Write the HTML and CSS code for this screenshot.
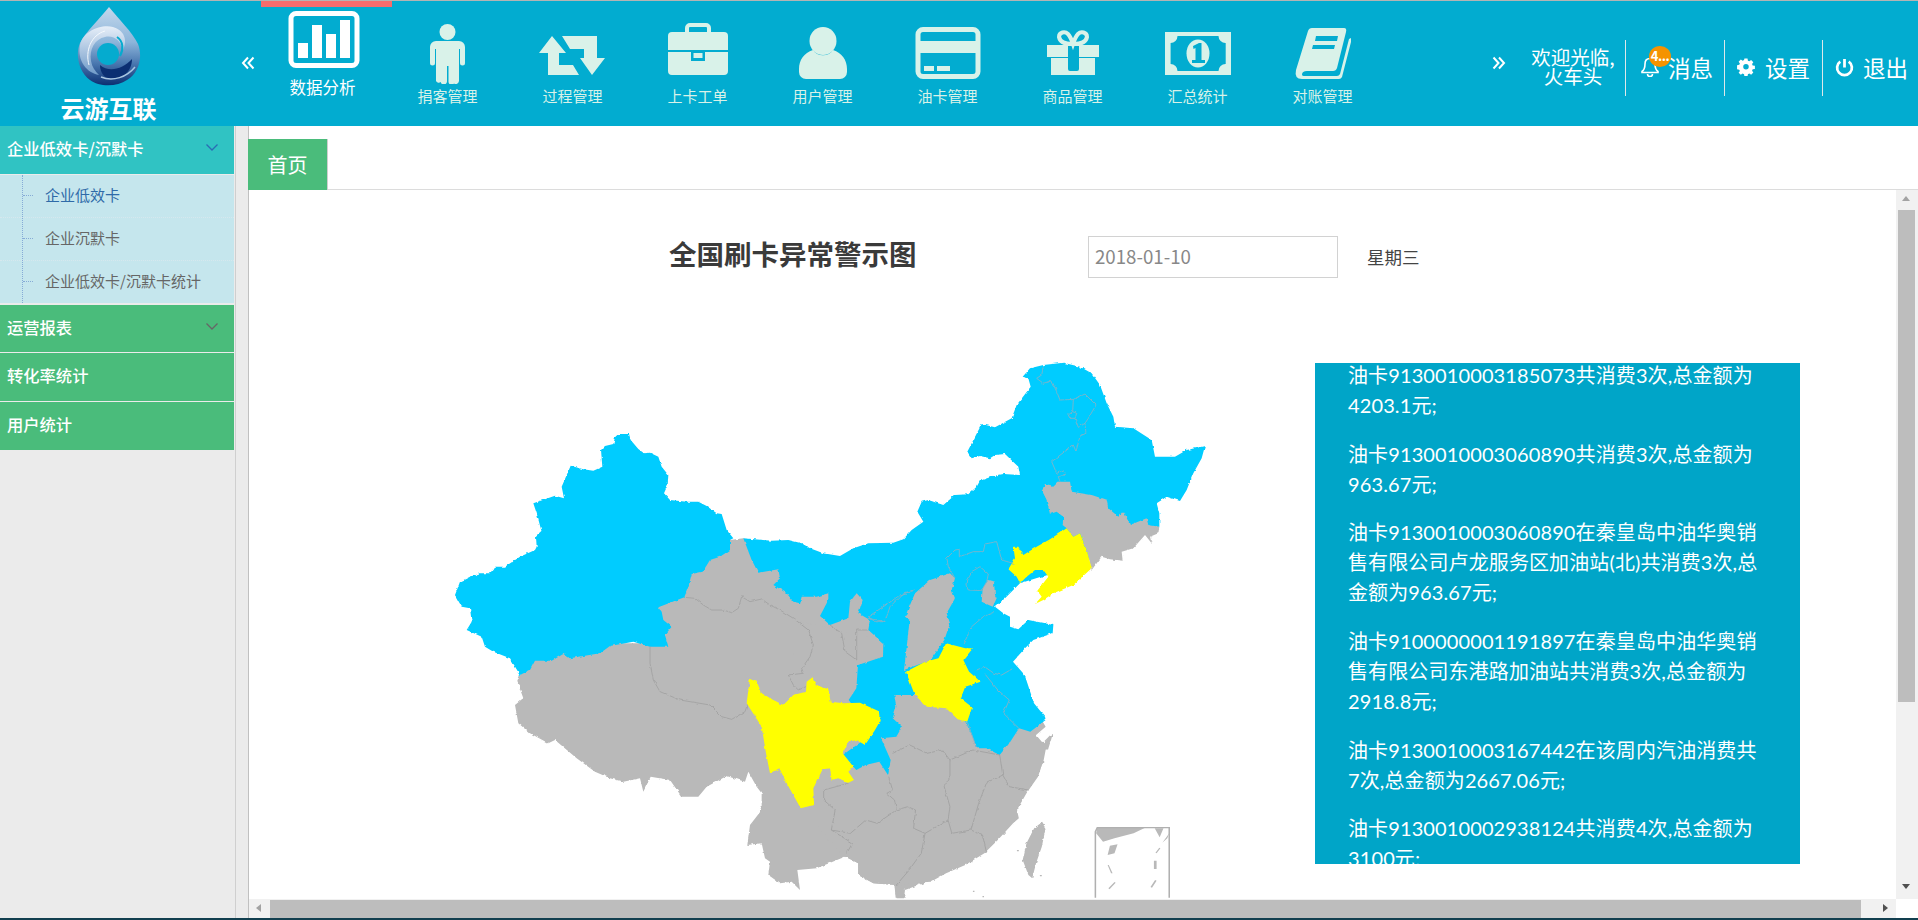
FILE: index.html
```html
<!DOCTYPE html>
<html lang="zh">
<head>
<meta charset="utf-8">
<title>云游互联</title>
<link rel="stylesheet" href="styles.css">
</head>
<body>
<div class="app">
  <header class="header">
    <div class="logo">
      <svg class="logo-mark" viewBox="0 0 64 79" width="64" height="79">
        <defs>
          <linearGradient id="dropFill" x1="0" y1="0" x2="0" y2="1">
            <stop offset="0" stop-color="#c4d8ec"/>
            <stop offset=".45" stop-color="#8db5da"/>
            <stop offset=".72" stop-color="#4a78b0"/>
            <stop offset="1" stop-color="#0b2f72"/>
          </linearGradient>
          <linearGradient id="dropLight" x1="0" y1="0" x2="0" y2="1">
            <stop offset="0" stop-color="#e6eef8"/>
            <stop offset="1" stop-color="#6f9ac8"/>
          </linearGradient>
        </defs>
        <path d="M32 0C40 10 56 26 61 37C66 50 62 66 50 73C40 80 22 80 13 73C2 65-2 48 3 36C8 26 24 10 32 0Z" fill="url(#dropFill)"/>
        <path d="M3 38C6 24 24 17 36 20C47 23 51 33 46 43C44 34 37 28 28 30C18 32 12 42 14 54C15 60 18 64 22 68C10 66 0 54 3 38Z" fill="url(#dropLight)"/>
        <circle cx="31" cy="47" r="11" fill="#05abcf"/>
        <path d="M40 30C46 34 47 42 43 49" fill="none" stroke="#05abcf" stroke-width="2"/>
        <path d="M23 58C32 66 46 62 55 52C55 64 46 72 35 72C28 72 23 66 23 58Z" fill="#0b2f72"/>
        <path d="M24 70C36 75 50 70 58 60" fill="none" stroke="#a9c6e2" stroke-width="1.5"/>
        <path d="M12 58C8 44 14 28 28 24" fill="none" stroke="#f5f9fd" stroke-width="1"/>
      </svg>
      <div class="logo-text">云游互联</div>
    </div>
    <svg class="prev" viewBox="0 0 14 14" width="14" height="14"><path d="M7 1.500 2 7l5 5.500M12.500 1.500 7.500 7l5 5.500" fill="none" stroke="#fff" stroke-width="2"/></svg>
    <nav class="nav">
      <a class="nav-item active">
        <svg class="nav-icon-active" viewBox="0 0 72 58" width="72" height="58">
          <rect x="3" y="2.500" width="66" height="52" rx="5" fill="none" stroke="#fff" stroke-width="5"/>
          <path d="M10 32h10v15H10zM24 14h10v33H24zM38 23h10v24H38zM52 9h10v38H52z" fill="#fff"/>
        </svg>
        <span class="nav-label">数据分析</span>
      </a>
      <a class="nav-item">
        <svg class="nav-icon" viewBox="0 0 80 62" width="80" height="62">
          <ellipse cx="39.500" cy="10" rx="8" ry="8"/>
          <path d="M28 19H51a6 6 0 0 1 6 6V41a2.500 2.500 0 0 1-5 0V27H51V59a3.200 3.200 0 0 1-5 2.400a3 3 0 0 1-5.500-1.800V44H39V59.500a3.200 3.200 0 0 1-6.300.500a3 3 0 0 1-4.700-1V27H27V41a2.500 2.500 0 0 1-5 0V25a6 6 0 0 1 6-6Z"/>
        </svg>
        <span class="nav-label">捐客管理</span>
      </a>
      <a class="nav-item">
        <svg class="nav-icon" viewBox="0 0 80 62" width="80" height="62">
          <g transform="translate(0 2)">
            <path d="M19 12 33 29H26V41H40L46 51H15V29H6Z"/>
            <path d="M29 12H64V34H72L59 51 47 34H51V25H37Z"/>
          </g>
        </svg>
        <span class="nav-label">过程管理</span>
      </a>
      <a class="nav-item">
        <svg class="nav-icon" viewBox="0 0 80 62" width="80" height="62">
          <rect class="line" x="29" y="3" width="22" height="11" rx="3" stroke-width="4"/>
          <path d="M14 10H66a4 4 0 0 1 4 4V28H10V14a4 4 0 0 1 4-4Z"/>
          <path d="M10 30H33V39H47V30H70V49a4 4 0 0 1-4 4H14a4 4 0 0 1-4-4Z"/>
          <rect x="35.500" y="31" width="9" height="5"/>
        </svg>
        <span class="nav-label">上卡工单</span>
      </a>
      <a class="nav-item">
        <svg class="nav-icon" viewBox="0 0 80 62" width="80" height="62">
          <path d="M16 47C16 38 21 31 30 28C34 35 46 35 50 28C59 31 64 38 64 47V50a7 7 0 0 1-7 7H23a7 7 0 0 1-7-7Z"/>
          <ellipse cx="40" cy="19" rx="13.500" ry="14"/>
        </svg>
        <span class="nav-label">用户管理</span>
      </a>
      <a class="nav-item">
        <svg class="nav-icon" viewBox="0 0 80 62" width="80" height="62">
          <rect class="line" x="10" y="7.500" width="60" height="47" rx="5" stroke-width="5"/>
          <path d="M10 19H70V31H10zM16 44H26V49H16zM29 44H42V49H29z"/>
        </svg>
        <span class="nav-label">油卡管理</span>
      </a>
      <a class="nav-item">
        <svg class="nav-icon" viewBox="0 0 80 62" width="80" height="62">
          <path class="line" d="M39 22C33 22 27 20 26 15C26 10 32 9 35 12C37 14 39 19 40 22C41 19 43 14 45 12C48 9 54 10 54 15C53 20 47 22 41 22" stroke-width="4"/>
          <path d="M14 23H35V35H14zM46 23H66V35H46zM18 36H35V47a2 2 0 0 0 2 2H44a2 2 0 0 0 2-2V36H62V53H18zM35 23H46V24H35z"/>
        </svg>
        <span class="nav-label">商品管理</span>
      </a>
      <a class="nav-item">
        <svg class="nav-icon" viewBox="0 0 80 62" width="80" height="62">
          <path fill-rule="evenodd" d="M7 10H73V53H7ZM19.500 14A7 7 0 0 1 12.600 21V42A7 7 0 0 1 19.500 49H60.500A7 7 0 0 1 67.700 42V21A7 7 0 0 1 60.500 14Z"/>
          <ellipse cx="40" cy="31.500" rx="11.500" ry="14"/>
          <path class="cut" d="M35 24l6-3h2.500V38H47v3H34v-3h3.500V26l-2 1Z"/>
        </svg>
        <span class="nav-label">汇总统计</span>
      </a>
      <a class="nav-item">
        <svg class="nav-icon" viewBox="0 0 80 62" width="80" height="62">
          <path d="M29 6H61Q64 6 63 10L54 46Q53 49 50 49H24Q19 49 19 52.500Q19 54 22 54H54Q56 54 57 52L66 17L68 16V20L59 55Q58 57 56 57H19Q11 57 13 48L25 9Q26 6 29 6Z"/>
          <path class="cut" d="M33 14H55L54 19H32ZM30 23H52L51 27H29Z"/>
        </svg>
        <span class="nav-label">对账管理</span>
      </a>
    </nav>
    <svg class="next" viewBox="0 0 14 14" width="14" height="14"><path d="M1.500 1.500 6.500 7l-5 5.500M7 1.500 12 7l-5 5.500" fill="none" stroke="#fff" stroke-width="2"/></svg>
    <div class="welcome">欢迎光临,<br>火车头</div>
    <div class="tool tool-msg">
      <svg class="tool-icon" viewBox="0 0 20 20" width="20" height="20"><path d="M10 1.500c-3.500 0-5 2.500-5 5.500 0 4-1 6-3 7.500v1h16v-1c-2-1.500-3-3.500-3-7.500 0-3-1.500-5.500-5-5.500ZM7.500 17a2.500 2.500 0 0 0 5 0" fill="none" stroke="#fff" stroke-width="1.600"/></svg>
      <span class="tool-label">消息</span>
      <span class="badge">4...</span>
    </div>
    <div class="tool tool-set">
      <svg class="tool-icon" viewBox="0 0 18 18" width="18" height="18"><path fill="#fff" fill-rule="evenodd" d="M7.300 0h3.400l.4 2.400 1.500.7 2-1.400 2.400 2.400-1.400 2 .7 1.500 2.400.4v3.400l-2.400.4-.7 1.500 1.400 2-2.400 2.400-2-1.400-1.500.7-.4 2.400H7.300l-.4-2.400-1.500-.7-2 1.400L1 15.600l1.400-2-.7-1.500L-.7 11.700V7.300l2.400-.4.700-1.500-1.400-2L3.400 1l2 1.400 1.500-.7ZM9 6a3 3 0 1 0 0 6 3 3 0 0 0 0-6Z" transform="translate(.7 .5) scale(.92)"/></svg>
      <span class="tool-label">设置</span>
    </div>
    <div class="tool tool-exit">
      <svg class="tool-icon" viewBox="0 0 18 18" width="19" height="19"><path d="M9 1v8M5 3.500a7 7 0 1 0 8 0" fill="none" stroke="#fff" stroke-width="2.600"/></svg>
      <span class="tool-label">退出</span>
    </div>
  </header>

  <div class="main">
    <aside class="sidebar">
      <div class="menu-head open">企业低效卡/沉默卡
        <svg class="chev" viewBox="0 0 12 7" width="12" height="7"><path d="M.5.500 6 6 11.500.500" fill="none" stroke="#2a6cb4" stroke-width="1.300"/></svg>
      </div>
      <ul class="sub-list">
        <li class="sub-item current">企业低效卡</li>
        <li class="sub-item">企业沉默卡</li>
        <li class="sub-item">企业低效卡/沉默卡统计</li>
      </ul>
      <div class="menu-head">运营报表
        <svg class="chev" viewBox="0 0 12 7" width="12" height="7"><path d="M.5.500 6 6 11.500.500" fill="none" stroke="#666" stroke-width="1.300"/></svg>
      </div>
      <div class="menu-head">转化率统计</div>
      <div class="menu-head">用户统计</div>
    </aside>
    <div class="gutter"></div>
    <section class="content">
      <div class="tabbar"><div class="tab">首页</div></div>
      <div class="view">
        <div class="scroller">
          <div class="title-row">
            <h1 class="title">全国刷卡异常警示图</h1>
            <div class="date-input">2018-01-10</div>
            <div class="weekday">星期三</div>
          </div>
          <div class="body-row">
            <svg class="map" viewBox="0 39 2340 1608" width="780" height="536">
              <defs>
                <filter id="rough" x="-5%" y="-5%" width="110%" height="110%" filterUnits="objectBoundingBox">
                  <feTurbulence type="fractalNoise" baseFrequency="0.07" numOctaves="2" seed="4" result="noise"/>
                  <feDisplacementMap in="SourceGraphic" in2="noise" scale="9" xChannelSelector="R" yChannelSelector="G"/>
                </filter>
              </defs>
              <g filter="url(#rough)">
              <!-- gray base: west -->
              <g class="gray" transform="translate(0 540)">
                <path d="M240 435 232 455 250 505 225 525 235 580 270 610 325 640 345 630 410 685 465 725 510 745 550 755 600 745 610 785 632 740 690 750 725 800 775 800 800 770 860 738 915 755 925 725 950 770 965 790 965 840 930 885 922 945 965 940 975 985 990 995 985 1035 1020 1060 1055 1055 1080 1080 1072 1020 1130 1015 1215 980 1255 1000 1255 1035 1300 1060 1365 1065 1370 1105 1392 1105 1395 1080 1450 1060 1500 1030 1500 300 1280 200 910 25 870 30 810 70 740 130 640 225 660 340 510 340 370 365 285 385 270 410Z"/>
              </g>
              <!-- gray base: east -->
              <g class="gray" transform="translate(600 810) scale(1.148 1)">
                <path d="M695 833 668 800 700 790 760 785 800 760 850 735 900 700 935 660 975 610 990 595 985 570 1010 520 1040 470 1055 420 1060 390 1070 370 1050 365 1035 345 1060 320 1050 300 1020 260 985 180 900 180 800 100 400 0 400 300 450 600 530 705 570 730 570 765 610 790 665 795 668 833Z"/>
                <path d="M1050 607 1060 625 1050 680 1035 730 1025 775 1015 765 1000 720 1010 670 1030 625Z"/>
                <path d="M1055 365 1075 342 1078 345 1066 390 1060 388Z"/>
              </g>
              <!-- blue -->
              <path class="blue" d="M525 262 535 252 567 252 572 270 595 297 612 310 630 308 655 320 665 350 685 375 683 405 672 430 690 450 740 455 775 455 800 468 830 490 845 492 860 540 880 565 870 570 870 600 840 620 810 630 788 665 755 672 745 710 733 742 655 772 665 785 670 810 695 830 675 855 685 890 685 890 630 890 580 875 510 888 480 910 390 925 370 912 335 932 285 932 270 960 240 975 210 925 160 905 135 890 125 860 80 840 95 815 90 775 65 770 45 735 60 695 90 680 120 670 150 670 165 650 195 650 240 620 285 600 290 590 288 560 305 545 290 490 280 460 345 437 372 445 365 410 392 347 430 358 460 362 487 350 483 300 495 288 520 282Z"/>
              <path class="blue" d="M910 565 995 572 1045 570 1085 580 1110 595 1150 610 1200 618 1240 595 1285 580 1360 578 1390 568 1415 540 1450 515 1432 485 1445 455 1465 450 1510 465 1545 435 1585 433 1610 410 1620 392 1660 378 1690 372 1740 375 1735 350 1695 312 1665 315 1650 325 1620 318 1595 325 1582 305 1625 222 1665 232 1715 205 1730 165 1772 110 1765 85 1748 80 1770 55 1810 45 1870 38 1920 50 1955 70 1980 105 2000 160 2020 200 2025 230 2080 235 2135 270 2145 320 2205 320 2240 300 2295 288 2285 325 2260 370 2240 420 2220 453 2180 440 2150 460 2158 490 2158 530 2100 540 1900 650 1740 700 1695 745 1665 770 1690 790 1710 800 1710 830 1735 838 1765 810 1840 825 1838 850 1780 870 1755 895 1719 935 1754 975 1782 1060 1815 1100 1817 1110 1771 1145 1737 1135 1708 1180 1679 1215 1639 1195 1610 1195 1596 1155 1576 1115 1500 1050 1424 1035 1363 1035 1369 1070 1358 1105 1386 1130 1369 1160 1323 1165 1352 1230 1344 1275 1318 1235 1277 1245 1249 1260 1208 1215 1300 1150 1226 1050 1249 1015 1254 945 1329 920 1330 880 1285 840 1290 810 1255 790 1268 750 1250 730 1230 755 1225 805 1170 825 1140 798 1165 750 1165 730 1130 740 1085 740 1080 760 1060 755 1040 730 1000 705 1020 685 1015 658 955 668 935 630Z"/>
              <!-- gray over blue -->
              <g class="gray">
                <path d="M1530 670 1545 685 1535 720 1545 745 1520 790 1530 820 1513 870 1472 930 1392 960 1398 910 1409 810 1395 800 1425 730 1470 690 1500 680Z"/>
              </g>
              <g transform="translate(1200 0)">
                <path class="gray" d="M605 420 615 405 640 410 655 395 690 395 695 425 755 435 800 450 805 475 835 500 850 482 870 525 920 505 925 525 958 530 955 550 930 560 935 580 915 555 880 595 845 605 848 632 810 628 785 620 755 660 740 600 720 550 700 560 680 535 668 525 670 500 650 485 630 492 620 450Z"/>
                <path class="gray" d="M445 690 462 695 465 735 470 745 458 770 425 755 428 715Z"/>
                <path class="yellow" d="M505 658 525 625 520 590 535 590 550 615 590 590 630 568 680 535 700 560 720 550 740 600 755 655 700 705 640 730 610 750 585 762 605 740 592 722 625 680 610 660 585 660 560 680 540 700 530 680Z"/>
                <path class="seam" d="M610 50 605 75 590 85 610 100 635 92 650 125 660 150 700 148 735 132 768 165 745 205 735 220 738 250 720 258 708 305 700 285 635 335 650 370 670 362 678 372 655 380 660 395"/>
                <path class="seam" d="M700 148 698 185 685 195 690 205 705 205 715 232 735 220M698 185 710 190 705 205"/>
                <path class="seam" d="M320 625 345 600 358 598 358 620 400 605 430 605 435 582 470 575 485 630 520 640M320 625 325 650 345 685"/>
                <path class="seam" d="M380 690 395 665 420 650 445 672 440 695 425 722 385 720 378 705Z"/>
                <path class="seam" d="M372 880 395 830 430 800 465 785"/>
                <path class="seam" d="M130 815 105 815 85 800 145 760 180 735 220 722"/>
              </g>
              <g transform="translate(600 810) scale(1.148 1)">
                <path class="yellow" d="M800 70 850 85 870 85 845 120 860 155 890 185 850 200 838 235 868 262 855 305 830 298 800 265 750 260 718 225 695 155 745 125 780 115Z"/>
                <path class="seam" d="M880 150 900 140 925 160 945 165 975 145M900 160 935 210 965 240 950 280 990 325M855 305 880 385"/>
                <path class="seam-gray" d="M660 400 705 375 750 400 790 390 810 420 870 390 940 405M810 420 810 470 795 500 810 560 805 600 815 640 865 630 885 550 905 490 948 465 940 405M948 465 965 500 1015 510M865 630 895 645 905 695M805 600 745 640 735 700 700 755 670 795M650 470 660 510 645 520 665 540 670 570 700 560 720 570 715 625 745 640M480 510 480 540 510 570 500 630 555 670 540 700M480 510 545 490M500 630 550 640 590 600 620 610 670 570"/>
              </g>
              <g transform="translate(0 540)">
                <path class="seam-gray" d="M733 202 765 205 790 225 815 240 850 240 875 248 895 235 905 200 930 215 965 207 990 225 1020 240 1060 265 1105 300 1120 345 1110 380 1085 415 1090 430 1045 435 1060 465 1075 480 1098 470"/>
                <path class="seam-gray" d="M630 350 630 400 640 450 660 485 720 510 810 525 845 560 875 568 915 545 925 515"/>
                <path class="seam-gray" d="M1170 285 1205 310 1215 365 1250 390 1250 300 1285 300"/>
                <path class="seam" d="M1285 265 1335 275 1350 230 1390 190 1420 180"/>
                <path class="yellow" d="M930 447 950 455 965 490 1000 510 1030 525 1060 495 1098 485 1100 455 1118 442 1128 465 1165 478 1172 515 1210 520 1260 518 1320 545 1322 570 1305 600 1275 645 1250 630 1225 635 1208 670 1240 710 1225 725 1242 750 1225 758 1195 745 1175 750 1170 715 1148 718 1120 775 1122 825 1082 835 1040 760 1018 715 990 730 978 670 965 590 920 520 925 480Z"/>
              </g>
              </g>
              <!-- South China Sea inset -->
              <g class="gray" transform="translate(600 810) scale(1.148 1)">
                <path d="M1195 623H1320L1290 640 1240 655 1210 665 1192 640ZM1345 625H1368L1358 652ZM1383 640 1365 668 1378 655ZM1228 677 1248 673 1240 700 1222 705ZM1225 735 1235 760 1231 760 1222 735ZM1343 722H1350V747H1343ZM1360 685 1350 700 1347 698 1357 683ZM1350 782 1338 803 1334 801 1346 780ZM1243 788 1227 808 1224 805 1240 786ZM985 690 990 690 990 694 985 694ZM1045 765 1050 765 1050 769 1045 769ZM870 812 874 812 874 816 870 816ZM895 828 899 828 899 832 895 832Z"/>
                <path class="frame" d="M1190 833V635L1195 623H1383V833"/>
              </g>
            </svg>
            <div class="notice">
              <div class="notice-inner">
                <p>油卡9130010003185073共消费3次,总金额为<br>4203.1元;</p>
                <p>油卡9130010003060890共消费3次,总金额为<br>963.67元;</p>
                <p>油卡9130010003060890在秦皇岛中油华奥销<br>售有限公司卢龙服务区加油站(北)共消费3次,总<br>金额为963.67元;</p>
                <p>油卡9100000001191897在秦皇岛中油华奥销<br>售有限公司东港路加油站共消费3次,总金额为<br>2918.8元;</p>
                <p>油卡9130010003167442在该周内汽油消费共<br>7次,总金额为2667.06元;</p>
                <p>油卡9130010002938124共消费4次,总金额为<br>3100元;</p>
              </div>
            </div>
          </div>
        </div>
        <div class="vbar">
          <span class="arrow arrow-up"></span>
          <div class="vthumb"></div>
          <span class="arrow arrow-down"></span>
        </div>
      </div>
      <div class="hrow">
        <div class="hbar">
          <span class="arrow arrow-left"></span>
          <div class="hthumb"></div>
          <span class="arrow arrow-right"></span>
        </div>
        <div class="corner"></div>
      </div>
    </section>
  </div>
  <div class="foot-line"></div>
</div>
</body>
</html>
```

FILE: styles.css
```css
* { box-sizing: border-box; }
html, body { margin: 0; padding: 0; }
body {
  width: 1918px;
  height: 920px;
  overflow: hidden;
  font-family: "Noto Sans CJK SC", "Noto Sans", sans-serif;
  background: #ebebeb;
}
.app { display: flex; flex-direction: column; height: 920px; border-top: 1px solid #b4b4b4; }

/* header */
.header { display: flex; flex: none; height: 125px; background: #02acd0; color: #fff; overflow: hidden; }
.logo { flex: none; width: 217px; display: flex; flex-direction: column; align-items: center; padding-top: 6px; }
.logo-mark { display: block; }
.logo-text { margin-top: 7px; font-size: 24px; line-height: 30px; font-weight: 700; white-space: nowrap; }
.prev { flex: none; margin: 55px 5px 0 24px; }
.nav { display: flex; flex: none; }
.nav-item { position: relative; flex: none; width: 125px; display: flex; flex-direction: column; align-items: center; padding-top: 21px; color: #d9f2e9; }
.nav-item.active { padding-top: 10px; color: #fff; }
.nav-item.active::before { content: ""; position: absolute; left: 1px; top: 0; width: 131px; height: 6px; background: #f76c6c; }
.nav-icon { display: block; fill: #d9f2e9; }
.nav-icon .line { fill: none; stroke: #d9f2e9; }
.nav-icon .cut { fill: #02acd0; }
.nav-icon-active { display: block; margin-left: 2px; }
.nav-label { margin-top: 2px; font-size: 15px; line-height: 20px; white-space: nowrap; }
.active .nav-label { margin-top: 8px; font-size: 16.500px; }
.next { flex: none; margin: 55px 6px 0 107px; }
.welcome { flex: none; width: 114px; height: 56px; margin-top: 39px; padding: 7px 0 0 9px; border-right: 1px solid #dfe8ea; font-size: 19.500px; line-height: 19px; text-align: center; white-space: nowrap; }
.tool { position: relative; flex: none; height: 56px; margin-top: 39px; padding-bottom: 2px; display: flex; align-items: center; font-size: 22.500px; border-right: 1px solid #dfe8ea; }
.tool-msg { width: 99px; padding-left: 14px; gap: 8px; }
.tool-set { width: 98px; padding-left: 12px; gap: 10px; }
.tool-exit { width: 96px; padding-left: 12px; gap: 9px; border-right: 0; }
.tool-icon { flex: none; display: block; }
.tool-label { line-height: 30px; white-space: nowrap; }
.badge { position: absolute; left: 23px; top: 6px; width: 22px; height: 21px; border-radius: 50%; background: #f59300; color: #fff; font-size: 13px; line-height: 20px; font-weight: 700; text-align: center; letter-spacing: -.5px; white-space: nowrap; }

/* main */
.main { display: flex; flex: 1; min-height: 0; }
.sidebar { flex: none; width: 234px; background: #ebebeb; }
.menu-head { position: relative; height: 48px; margin-bottom: 1px; padding-left: 7px; background: #4abc7b; color: #fff; font-size: 16.300px; line-height: 45px; font-weight: 500; white-space: nowrap; }
.menu-head.open { background: #30c3c3; }
.sub-list + .menu-head { height: 47px; margin-top: 2px; }
.chev { position: absolute; left: 206px; top: 18px; }
.sub-list { position: relative; list-style: none; margin: 0; padding: 0; background: #c5e6ed; }
.sub-list::before { content: ""; position: absolute; left: 22px; top: 0; bottom: 0; border-left: 1px dotted #86abd6; }
.sub-item { position: relative; height: 43px; padding-left: 45px; font-size: 15px; line-height: 40px; color: #666; border-bottom: 1px dotted #d6e8ee; white-space: nowrap; }
.sub-item:last-child { height: 42px; border-bottom: 0; }
.sub-item::before { content: ""; position: absolute; left: 23px; top: 20px; width: 10px; border-top: 1px dotted #86abd6; }
.sub-item.current { color: #2f6aa8; }
.gutter { flex: none; width: 14px; margin-left: 1px; border-left: 1px solid #cfcfcf; border-right: 1px solid #c0c0c0; background: #ebebeb; }

.content { flex: 1; min-width: 0; display: flex; flex-direction: column; background: #fff; }
.tabbar { flex: none; height: 64px; display: flex; align-items: flex-end; border-bottom: 1px solid #dcdcdc; }
.tab { width: 80px; height: 51px; margin-left: -1px; margin-bottom: -1px; background: #4abc7b; border-right: 1px solid #cfcfcf; color: #fff; font-size: 20px; line-height: 52px; text-align: center; }
.view { flex: 1; min-height: 0; display: flex; }
.scroller { flex: 1; min-width: 0; overflow: hidden; }
.title-row { display: flex; align-items: flex-start; padding: 46px 0 0 420px; }
.title { width: 419px; margin: -2px 0 0; font-size: 27.500px; line-height: 38px; font-weight: 700; color: #3a3a3a; white-space: nowrap; }
.date-input { width: 250px; height: 42px; border: 1px solid #d2d2d2; padding-left: 6px; font-size: 18.700px; line-height: 38px; color: #888; }
.weekday { margin-left: 29px; font-size: 17.500px; line-height: 42px; color: #444; white-space: nowrap; }
.body-row { display: flex; align-items: flex-start; margin-top: 85px; padding-left: 191px; }
.map { flex: none; display: block; overflow: visible; }
.gray path, path.gray { fill: #b9b9b9; }
.blue { fill: #00ccff; }
.yellow { fill: #ffff00; }
.seam { fill: none; stroke: #8fb0c2; stroke-width: 2.400; }
.seam-gray { fill: none; stroke: #a0a0a0; stroke-width: 2.400; }
.gray path.frame { fill: none; stroke: #b0b0b0; stroke-width: 4; }
.notice { flex: none; width: 485px; height: 501px; margin-left: 95px; padding-left: 33px; overflow: hidden; background: #00a5c8; color: #fff; font-family: Lato, "Noto Sans CJK SC", sans-serif; font-size: 20px; line-height: 30px; letter-spacing: .11px; white-space: nowrap; }
.notice-inner { margin-top: -3px; }
.notice p { margin: 0 0 18.700px; }

/* scrollbars */
.vbar { position: relative; flex: none; width: 22px; background: #f1f1f1; }
.vthumb { position: absolute; left: 2px; top: 20px; width: 17px; height: 492px; background: #bdbdbd; }
.arrow { position: absolute; width: 0; height: 0; border-style: solid; }
.arrow-up { left: 6px; top: 6px; border-width: 0 4.500px 5px; border-color: transparent transparent #a3a3a3; }
.arrow-down { left: 6px; bottom: 10px; border-width: 5px 4.500px 0; border-color: #505050 transparent transparent; }
.hrow { flex: none; display: flex; height: 19px; }
.hbar { position: relative; flex: 1; background: #f1f1f1; }
.hthumb { position: absolute; left: 21px; right: 35px; top: 1px; bottom: 0; background: #bdbdbd; }
.arrow-left { left: 7px; top: 5px; border-width: 4.500px 5px 4.500px 0; border-color: transparent #a3a3a3 transparent transparent; }
.arrow-right { right: 8px; top: 5px; border-width: 4.500px 0 4.500px 5px; border-color: transparent transparent transparent #505050; }
.corner { flex: none; width: 22px; background: #fff; }
.foot-line { flex: none; height: 2px; background: #123f4f; }
```
